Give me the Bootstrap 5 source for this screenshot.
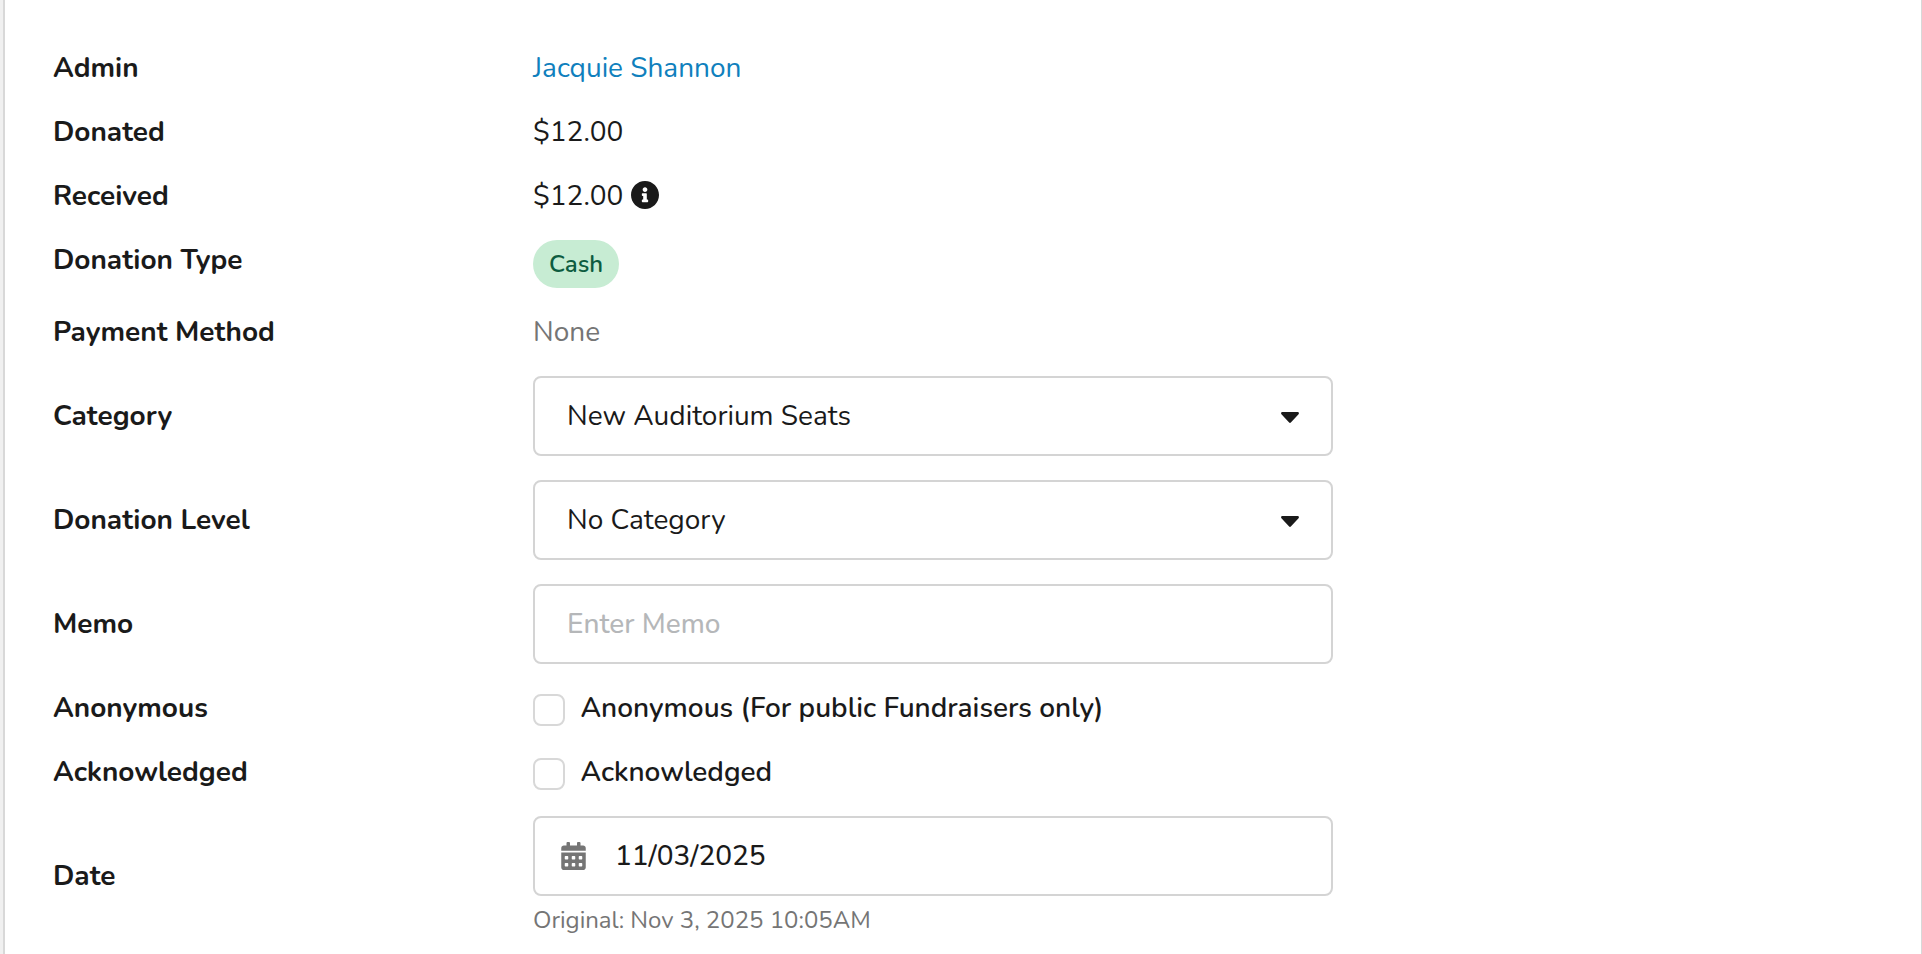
<!DOCTYPE html>
<html lang="en">
  <head>
    <meta charset="UTF-8" />
    <meta name="viewport" content="width=device-width, initial-scale=1.0" />
    <title>Donation Details</title>
    <link
      href="https://cdn.jsdelivr.net/npm/bootstrap@5.3.0/dist/css/bootstrap.min.css"
      rel="stylesheet"
    />
    <style>
      body {
        background: #f0f0f0;
        color: #1a1a1a;
        font-family: Nunito, Lato, "Open Sans", sans-serif;
        font-size: 28px;
        line-height: 40px;
      }
      .details-panel {
        margin-left: 3px;
        height: 954px;
        padding: 36px 0 0 48px;
        border-left: 2px solid #d8d8d8;
        border-right: 1px solid #d8d8d8;
      }
      .detail-row { padding: 12px 0; }
      .detail-label {
        width: 480px;
        font-weight: 700;
      }
      .detail-value { width: 800px; }
      .admin-link { color: #0f80bd; }
      .muted-text { color: #757575; }
      .type-pill {
        height: 48px;
        padding: 0 16px;
        background: #c7ecd3;
        color: #0d5c40;
        font-size: 24px;
        font-weight: 600;
      }
      .field-box,
      .field-box:focus {
        height: 80px;
        padding: 0 32px;
        border: 2px solid #d4d4d4;
        border-radius: 8px;
        color: #1a1a1a;
        font-size: 28px;
        line-height: 40px;
        box-shadow: none;
      }
      .field-box::placeholder { color: #b5b7b9; font-weight: 500; }
      .field-caret { margin-top: 2px; }
      .date-box { padding-left: 26px; }
      .date-text { margin-left: 29px; font-weight: 500; }
      .check-box.form-check-input {
        width: 32px;
        height: 32px;
        margin: 6px 0 0;
        border: 2px solid #d8d8d8;
        border-radius: 8px;
      }
      .check-group { gap: 15.5px; }
      .check-text { font-weight: 600; }
      .original-date {
        height: 40px;
        padding-top: 4px;
        font-size: 24px;
      }
      .info-icon { width: 28px; height: 28px; margin: 5px 0 0 8px; }
    </style>
  </head>
  <body>
    <div class="details-panel bg-white overflow-hidden">
      <div class="detail-row d-flex">
        <div class="detail-label">Admin</div>
        <div class="detail-value">
          <a href="#" class="admin-link text-decoration-none">Jacquie Shannon</a>
        </div>
      </div>

      <div class="detail-row d-flex">
        <div class="detail-label">Donated</div>
        <div class="detail-value">$12.00</div>
      </div>

      <div class="detail-row d-flex">
        <div class="detail-label">Received</div>
        <div class="detail-value d-flex">
          $12.00
          <svg class="info-icon" viewBox="8 8 496 496" fill="currentColor">
            <path d="M256 8C119.043 8 8 119.083 8 256c0 136.997 111.043 248 248 248s248-111.003 248-248C504 119.083 392.957 8 256 8zm0 110c23.196 0 42 18.804 42 42s-18.804 42-42 42-42-18.804-42-42 18.804-42 42-42zm56 254c0 6.627-5.373 12-12 12h-88c-6.627 0-12-5.373-12-12v-24c0-6.627 5.373-12 12-12h12v-64h-12c-6.627 0-12-5.373-12-12v-24c0-6.627 5.373-12 12-12h64c6.627 0 12 5.373 12 12v100h12c6.627 0 12 5.373 12 12v24z" />
          </svg>
        </div>
      </div>

      <div class="detail-row d-flex">
        <div class="detail-label">Donation Type</div>
        <div class="detail-value d-flex">
          <span class="type-pill rounded-pill d-flex align-items-center">Cash</span>
        </div>
      </div>

      <div class="detail-row d-flex">
        <div class="detail-label">Payment Method</div>
        <div class="detail-value muted-text">None</div>
      </div>

      <div class="detail-row d-flex align-items-center">
        <div class="detail-label">Category</div>
        <div class="detail-value">
          <div class="field-box d-flex align-items-center justify-content-between">
            <span>New Auditorium Seats</span>
            <svg class="field-caret" width="18" height="11" viewBox="10 191 300 171" preserveAspectRatio="none" fill="currentColor">
              <path d="M31.3 192h257.3c17.8 0 26.7 21.5 14.1 34.1L174.1 354.8c-7.8 7.8-20.5 7.8-28.3 0L17.2 226.1C4.6 213.5 13.5 192 31.3 192z" />
            </svg>
          </div>
        </div>
      </div>

      <div class="detail-row d-flex align-items-center">
        <div class="detail-label">Donation Level</div>
        <div class="detail-value">
          <div class="field-box d-flex align-items-center justify-content-between">
            <span>No Category</span>
            <svg class="field-caret" width="18" height="11" viewBox="10 191 300 171" preserveAspectRatio="none" fill="currentColor">
              <path d="M31.3 192h257.3c17.8 0 26.7 21.5 14.1 34.1L174.1 354.8c-7.8 7.8-20.5 7.8-28.3 0L17.2 226.1C4.6 213.5 13.5 192 31.3 192z" />
            </svg>
          </div>
        </div>
      </div>

      <div class="detail-row d-flex align-items-center">
        <label class="detail-label" for="memo">Memo</label>
        <div class="detail-value">
          <input type="text" id="memo" class="form-control field-box" placeholder="Enter Memo" />
        </div>
      </div>

      <div class="detail-row d-flex">
        <div class="detail-label">Anonymous</div>
        <div class="detail-value check-group d-flex">
          <input type="checkbox" id="anonymous" class="form-check-input check-box" />
          <label class="check-text" for="anonymous">Anonymous (For public Fundraisers only)</label>
        </div>
      </div>

      <div class="detail-row d-flex">
        <div class="detail-label">Acknowledged</div>
        <div class="detail-value check-group d-flex">
          <input type="checkbox" id="acknowledged" class="form-check-input check-box" />
          <label class="check-text" for="acknowledged">Acknowledged</label>
        </div>
      </div>

      <div class="detail-row d-flex align-items-center">
        <div class="detail-label">Date</div>
        <div class="detail-value">
          <div class="field-box date-box d-flex align-items-center">
            <svg class="muted-text" width="25" height="28" viewBox="0 0 448 512" fill="currentColor" fill-rule="evenodd">
              <path d="M0 464c0 26.500 21.500 48 48 48h352c26.500 0 48-21.500 48-48V192H0zM76 256h40q12 0 12 12v40q0 12-12 12h-40q-12 0-12-12v-40q0-12 12-12zM204 256h40q12 0 12 12v40q0 12-12 12h-40q-12 0-12-12v-40q0-12 12-12zM332 256h40q12 0 12 12v40q0 12-12 12h-40q-12 0-12-12v-40q0-12 12-12zM76 384h40q12 0 12 12v40q0 12-12 12h-40q-12 0-12-12v-40q0-12 12-12zM204 384h40q12 0 12 12v40q0 12-12 12h-40q-12 0-12-12v-40q0-12 12-12zM332 384h40q12 0 12 12v40q0 12-12 12h-40q-12 0-12-12v-40q0-12 12-12z" />
              <path d="M400 64h-48V16c0-8.800-7.200-16-16-16h-32c-8.800 0-16 7.200-16 16v48H160V16c0-8.800-7.200-16-16-16h-32c-8.800 0-16 7.200-16 16v48H48C21.500 64 0 85.500 0 112v48h448v-48c0-26.500-21.500-48-48-48z" />
            </svg>
            <span class="date-text">11/03/2025</span>
          </div>
          <div class="original-date muted-text">Original: Nov 3, 2025 10:05AM</div>
        </div>
      </div>
    </div>

    <script src="https://cdn.jsdelivr.net/npm/bootstrap@5.3.0/dist/js/bootstrap.bundle.min.js"></script>
  </body>
</html>
